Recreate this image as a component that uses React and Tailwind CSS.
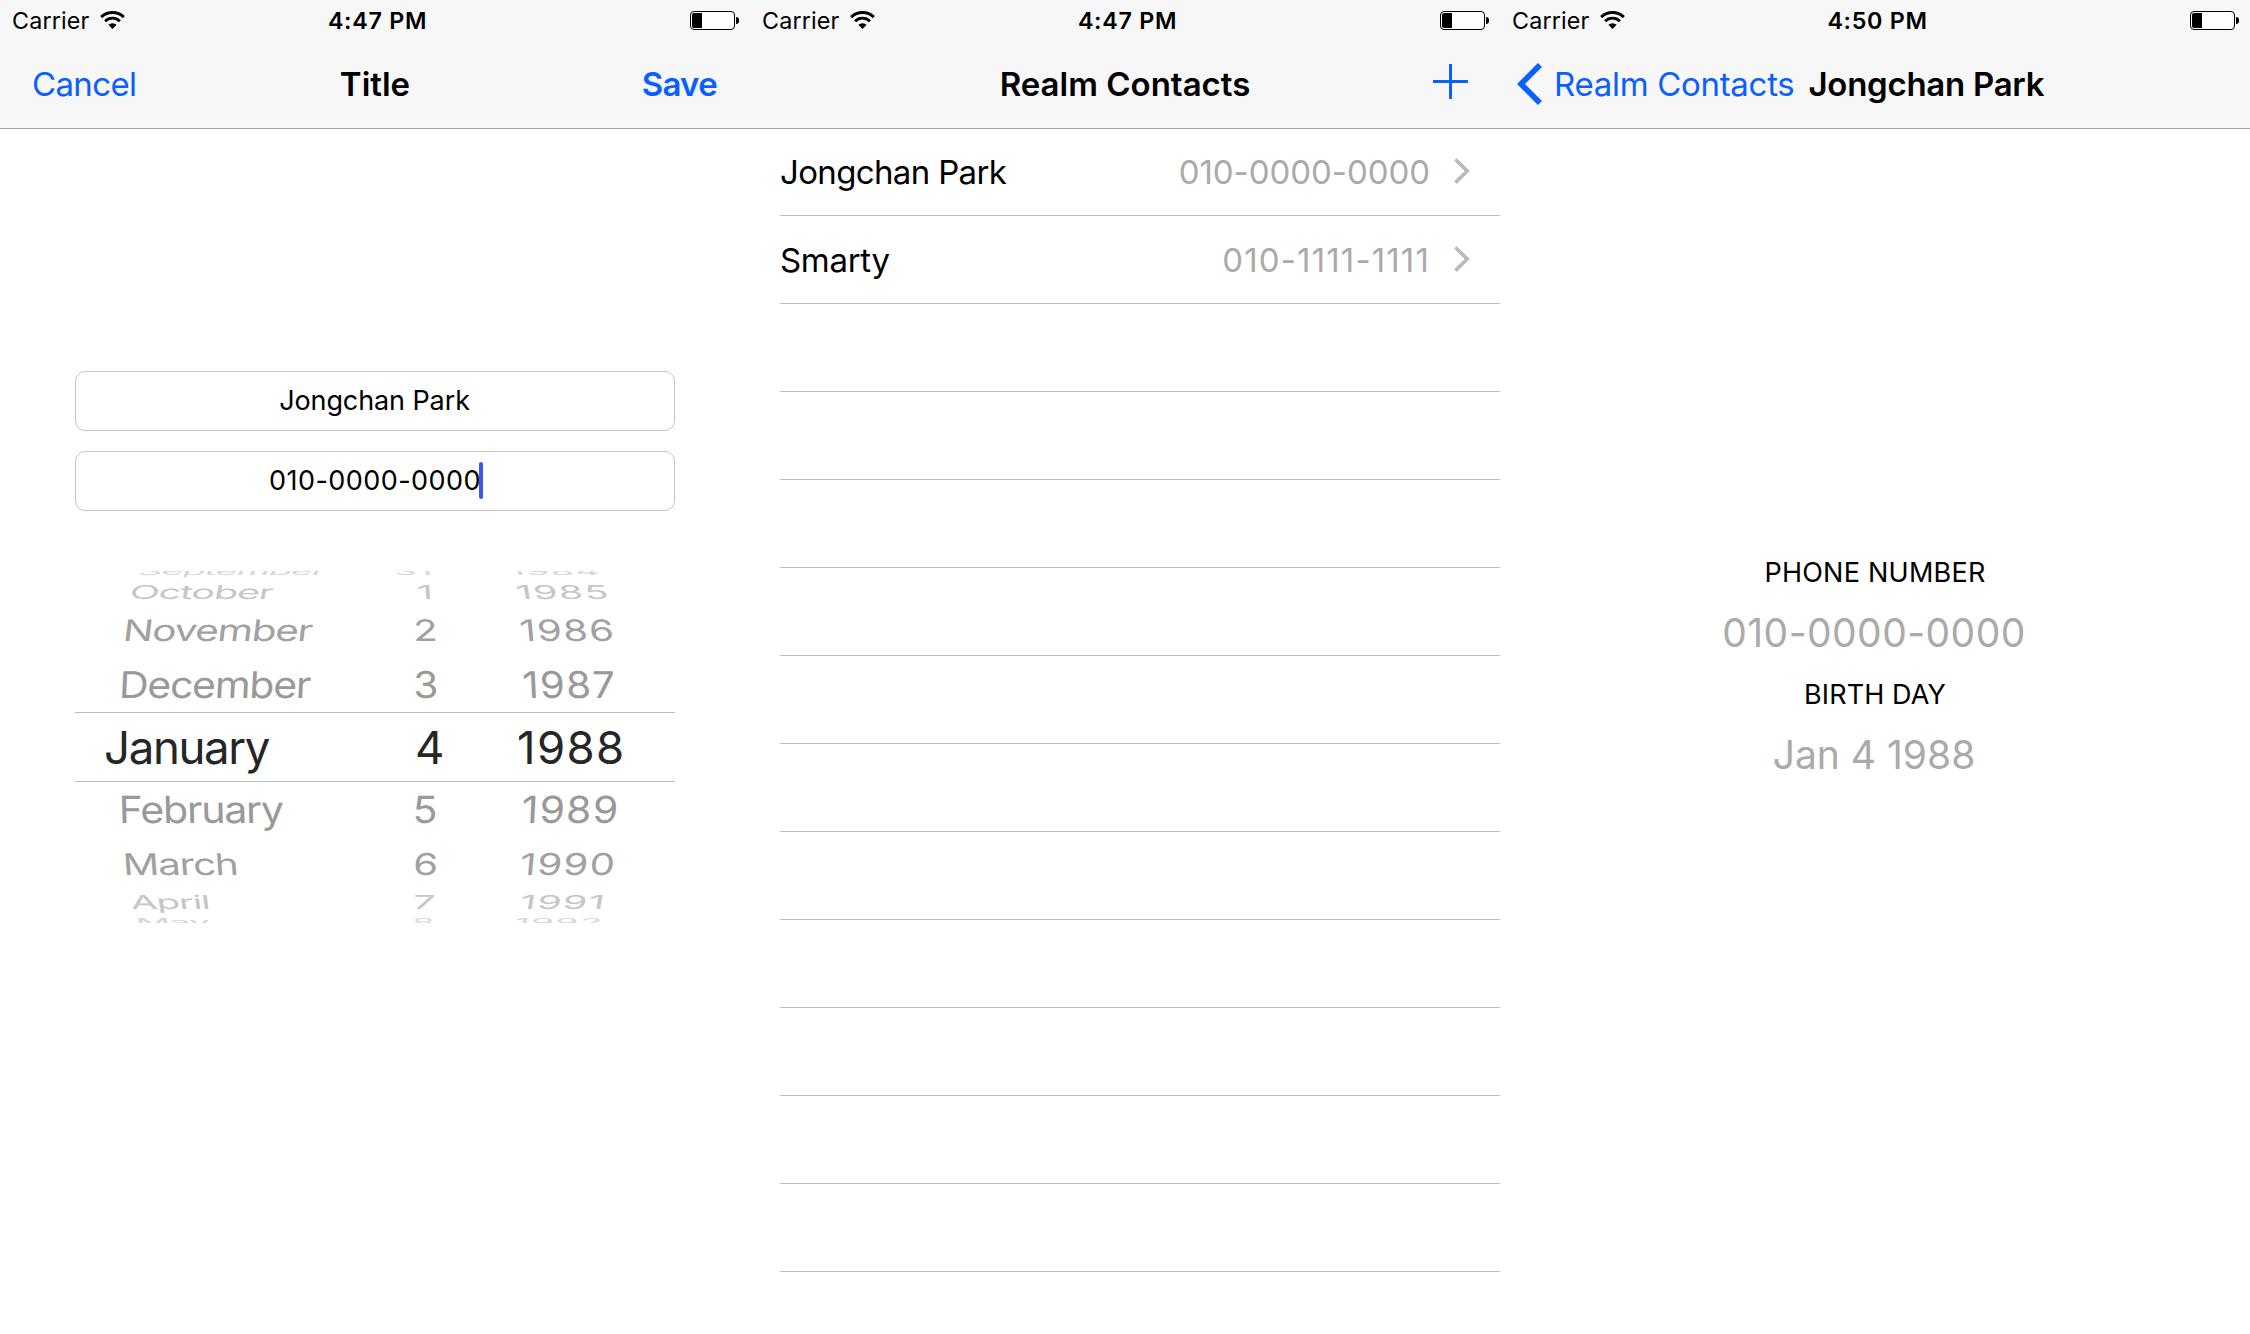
import React from "react";

function Wifi() {
  return (
    <svg className="ml-[11px] mt-[11px] h-[18px] w-[25px]" viewBox="0 0 25 18" fill="none" stroke="#000">
      <path d="M1.2 6.1A16.2 16.2 0 0 1 23.8 6.1" strokeWidth="3" />
      <path d="M5.1 10.2A10.6 10.6 0 0 1 19.9 10.2" strokeWidth="2.8" />
      <path d="M8.4 13.8A6 6 0 0 1 16.6 13.8L12.5 18Z" fill="#000" stroke="none" />
    </svg>
  );
}

function Battery() {
  return (
    <div className="mt-[11px] flex items-center">
      <div className="h-[19px] w-[45px] rounded-[4px] border-[1.4px] border-black bg-white p-px">
        <div className="h-[15px] w-[10px] rounded-l-[2px] bg-black" />
      </div>
      <div className="ml-px h-[7px] w-[3px] rounded-r-[3px] bg-black" />
    </div>
  );
}

function StatusBar({ time }) {
  return (
    <div className="grid h-[41px] grid-cols-[1fr_auto_1fr] items-start pl-[12px] pr-[11px]">
      <div className="flex items-start">
        <span className="text-[23.3px] leading-[41px] tracking-[0.15px]">Carrier</span>
        <Wifi />
      </div>
      <span className="ml-[4px] text-[23.3px] font-semibold leading-[41px] tracking-[0.7px]">{time}</span>
      <div className="flex justify-end">
        <Battery />
      </div>
    </div>
  );
}

function Screen({ time, nav, children }) {
  return (
    <section className="flex h-[1334px] w-[750px] flex-col">
      <header className="h-[129px] border-b border-[#a5a5a5] bg-[#f7f7f7]">
        <StatusBar time={time} />
        <nav className="h-[87px] text-[33px] leading-[87px]">{nav}</nav>
      </header>
      {children}
    </section>
  );
}

function Field({ children }) {
  return (
    <div className="flex h-[60px] items-center justify-center rounded-[10px] border border-[#c4c4c4] text-[27px] leading-[58px]">
      {children}
    </div>
  );
}

const FONT_BASELINE = 39.3;

/* Each cell: text, left offset in its column, horizontal scale, shear. */
const wheel = [
  { h: 6, base: 4, sy: 0.24, color: "text-[#d6d6d6]", cells: [["September", 62, 0.835, -0.09], ["31", 19.5, 0.8, 0.03], ["1984", 15.5, 0.83, 0.09]] },
  { h: 29, base: 22, sy: 0.42, color: "text-[#c6c6c6]", cells: [["October", 53.5, 0.87, -0.08], ["1", 42.5, 0.86, 0.03], ["1985", 22, 0.865, 0.07]] },
  { h: 46, base: 35.3, sy: 0.65, color: "text-[#a1a1a1]", cells: [["November", 47, 0.888, -0.08], ["2", 38.5, 0.88, 0.02], ["1986", 25.5, 0.88, 0.06]] },
  { h: 60, base: 46.4, sy: 0.81, color: "text-[#999999]", cells: [["December", 43.5, 0.9, -0.04], ["3", 38.5, 0.89, 0.01], ["1987", 28, 0.885, 0.04]] },
  { h: 70, base: 51, sy: 1, color: "text-[#262626]", selected: true, cells: [["January", 29, 1.003, 0], ["4", 40, 1, 0], ["1988", 22, 1, 0]] },
  { h: 60, base: 41.7, sy: 0.82, color: "text-[#999999]", cells: [["February", 44, 0.905, 0.02], ["5", 37.5, 0.9, -0.01], ["1989", 26, 0.9, -0.04]] },
  { h: 46, base: 33, sy: 0.66, color: "text-[#a1a1a1]", cells: [["March", 48.5, 0.89, 0.05], ["6", 38, 0.88, -0.02], ["1990", 24, 0.88, -0.06]] },
  { h: 29, base: 21, sy: 0.42, color: "text-[#c6c6c6]", cells: [["April", 56.5, 0.855, 0.06], ["7", 37.5, 0.86, -0.03], ["1991", 24, 0.865, -0.07]] },
  { h: 6, base: 9, sy: 0.24, color: "text-[#d6d6d6]", cells: [["May", 62, 0.835, 0.06], ["8", 36, 0.83, -0.03], ["1992", 18, 0.82, -0.08]] },
];

function DatePicker() {
  return (
    <div className="mt-[60px] h-[352px] overflow-hidden text-[45.5px] leading-[45.5px]">
      {wheel.map((row, i) => (
        <div
          key={i}
          className={
            "grid grid-cols-[300px_120px_180px] items-start " +
            row.color +
            (row.selected ? " border-y border-[#bcbcbc]" : "")
          }
          style={{ height: row.h }}
        >
          {row.cells.map(([text, x, sx, shear], col) => (
            <span
              key={text}
              className={"h-0 whitespace-nowrap " + (col === 0 ? "tracking-[-1.38px]" : "tracking-[1.4px]")}
              style={{
                transformOrigin: `0 ${FONT_BASELINE}px`,
                transform: `matrix(${sx}, 0, ${shear}, ${row.sy}, ${x}, ${row.base - FONT_BASELINE})`,
              }}
            >
              {text}
            </span>
          ))}
        </div>
      ))}
    </div>
  );
}

function EditScreen() {
  return (
    <Screen
      time="4:47 PM"
      nav={
        <div className="grid grid-cols-[1fr_auto_1fr] pl-[32px] pr-[33px]">
          <span className="tracking-[-0.64px] text-[#0a60ff]">Cancel</span>
          <span className="ml-px font-semibold">Title</span>
          <span className="text-right font-semibold tracking-[-0.7px] text-[#0a60ff]">Save</span>
        </div>
      }
    >
      <div className="px-[75px] pt-[242px]">
        <div className="flex flex-col gap-5">
          <Field>
            <span className="-ml-px tracking-[-0.1px]">Jongchan Park</span>
          </Field>
          <Field>
            <span className="relative tracking-[0.45px]">
              010-0000-0000
              <span className="absolute left-full top-[10px] -ml-0.5 h-[37px] w-[4px] rounded-full bg-[#3c58ee]" />
            </span>
          </Field>
        </div>
        <DatePicker />
      </div>
    </Screen>
  );
}

const contacts = [
  { name: "Jongchan Park", phone: "010-0000-0000", nameSpacing: "tracking-[-0.65px]", phoneSpacing: "tracking-[-0.05px]" },
  { name: "Smarty", phone: "010-1111-1111", nameSpacing: "tracking-[-0.3px]", phoneSpacing: "tracking-[1.15px]" },
];

function ListScreen() {
  return (
    <Screen
      time="4:47 PM"
      nav={
        <div className="grid grid-cols-[1fr_auto_1fr] pl-[32px] pr-[32px]">
          <span />
          <span className="font-semibold">Realm Contacts</span>
          <svg className="mt-[23px] h-[35px] w-[35px] justify-self-end" viewBox="0 0 35 35" stroke="#0a60ff" strokeWidth="3">
            <path d="M17.5 0V35M0 17.5H35" />
          </svg>
        </div>
      }
    >
      <ul className="-mt-px pl-[30px]">
        {Array.from({ length: 13 }, (_, i) => {
          const c = contacts[i];
          return (
            <li key={i} className="flex h-[88px] items-start border-b border-[#bcbcbe] pr-[30px] text-[33px] leading-[88px]">
              {c && (
                <>
                  <span className={"flex-1 " + c.nameSpacing}>{c.name}</span>
                  <span className={"text-[#aaaaaa] " + c.phoneSpacing}>{c.phone}</span>
                  <svg className="ml-[24px] mt-[30px] h-[26px] w-[16px]" viewBox="0 0 16 26" fill="none" stroke="#bab9c2" strokeWidth="3.6">
                    <path d="M1.4 1.4L13.2 13L1.4 24.6" />
                  </svg>
                </>
              )}
            </li>
          );
        })}
      </ul>
    </Screen>
  );
}

function DetailScreen() {
  return (
    <Screen
      time="4:50 PM"
      nav={
        <div className="flex pl-[17px]">
          <svg className="mt-[22px] h-[42px] w-[25px]" viewBox="0 0 25 42" fill="none" stroke="#0a60ff" strokeWidth="5.8">
            <path d="M23 2L4 21L23 40" />
          </svg>
          <span className="ml-[12px] tracking-[-0.3px] text-[#0a60ff]">Realm Contacts</span>
          <span className="ml-[14px] font-semibold tracking-[-0.27px]">Jongchan Park</span>
        </div>
      }
    >
      <dl className="pt-[413px] text-center leading-[61px]">
        <dt className="text-[27px] tracking-[0.25px]">PHONE NUMBER</dt>
        <dd className="-mt-px mb-px mr-[2px] text-[39px] leading-[61px] tracking-[0.44px] text-[#aaaaaa]">010-0000-0000</dd>
        <dt className="text-[27px] tracking-[0.1px]">BIRTH DAY</dt>
        <dd className="-mt-px mr-[2px] text-[39px] leading-[61px] text-[#aaaaaa]">Jan 4 1988</dd>
      </dl>
    </Screen>
  );
}

export default function App() {
  return (
    <main className="flex h-[1334px] w-[2250px] overflow-hidden bg-white font-['Inter',sans-serif] text-black">
      <EditScreen />
      <ListScreen />
      <DetailScreen />
    </main>
  );
}
